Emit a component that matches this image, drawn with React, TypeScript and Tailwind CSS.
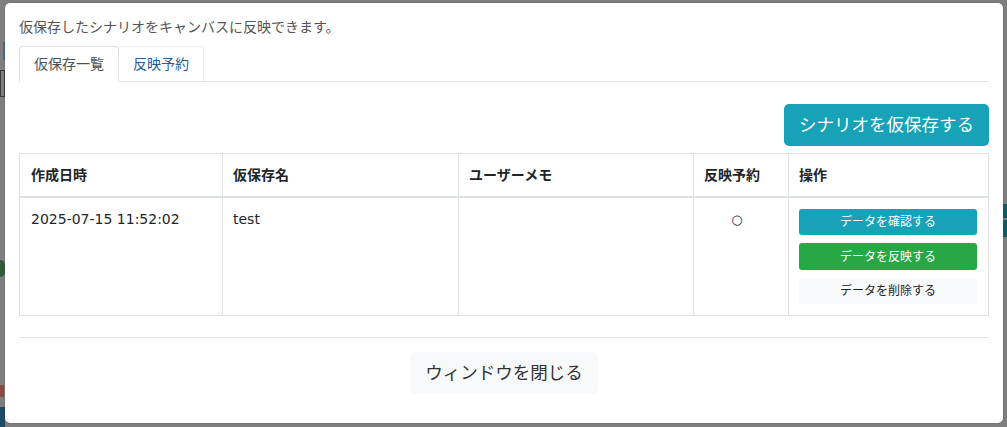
import React from "react";

const font = "font-['DejaVu_Sans','Noto_Sans_CJK_JP',sans-serif]";

const ActionButton = ({ label, tone }: { label: string; tone: "info" | "success" | "light" }) => {
  const toneClass =
    tone === "info"
      ? "bg-[#17a2b8] text-white"
      : tone === "success"
      ? "bg-[#28a745] text-white"
      : "bg-[#f8f9fa] text-[#212529]";
  return (
    <button
      className={`w-[178px] rounded-[3px] text-[12px] leading-[18px] flex items-center justify-center ${toneClass} ${
        tone === "success" ? "h-[27px]" : "h-[26px]"
      }`}
    >
      {label}
    </button>
  );
};

export default function App() {
  return (
    <div className={`w-[1007px] h-[427px] bg-[#7f7f7f] flex overflow-hidden ${font}`}>
      {/* dimmed page behind the modal, left edge */}
      <div className="w-[5px] flex flex-col shrink-0">
        <div className="h-[42px]" />
        <div className="h-[18px] w-[2px] ml-[3px] bg-[#4a6a8a]" />
        <div className="h-[10px]" />
        <div className="h-[27px] w-[5px] border border-[#3a3a3a]" />
        <div className="h-[163px]" />
        <div className="h-[17px] w-[5px] rounded-r-full bg-[#2f5a3a]" />
        <div className="h-[108px]" />
        <div className="h-[12px] w-[4px] bg-[#8a4a40]" />
        <div className="h-[10px]" />
        <div className="flex-1 bg-[#1f4a66]" />
      </div>

      {/* modal */}
      <div className="mt-[3px] w-[998px] h-[420px] bg-white rounded-[5px] px-[14px] pt-[14px] flex flex-col shrink-0 shadow-[0_0_2px_rgba(0,0,0,0.3)]">
        <p className="text-[14px] leading-[21px] text-[#555]">
          仮保存したシナリオをキャンバスに反映できます。
        </p>

        <div className="mt-[8px] h-[36px] flex items-end border-b border-[#dee2e6]">
          <div className="w-[100px] h-[36px] -mb-px border border-[#dee2e6] border-b-white bg-white rounded-t-[4px] flex items-center justify-center text-[14px] text-[#495057]">
            仮保存一覧
          </div>
          <div className="w-[85px] h-[35px] border-t border-r border-[#e9ecef] rounded-tr-[4px] flex items-center justify-center text-[14px] text-[#245c94]">
            反映予約
          </div>
        </div>

        <div className="mt-[22px] flex justify-end">
          <button className="h-[42px] w-[205px] rounded-[5px] bg-[#17a2b8] text-white text-[17.5px] leading-[26px]">
            シナリオを仮保存する
          </button>
        </div>

        <div className="mt-[7px] border border-[#dee2e6] text-[14px] text-[#212529]">
          <div className="grid grid-cols-[202px_236px_235px_95px_200px] h-[44px] border-b-2 border-[#dee2e6] font-bold">
            <div className="px-[11px] flex items-center">作成日時</div>
            <div className="px-[10px] border-l border-[#dee2e6] flex items-center">仮保存名</div>
            <div className="px-[10px] border-l border-[#dee2e6] flex items-center">ユーザーメモ</div>
            <div className="px-[10px] border-l border-[#dee2e6] flex items-center">反映予約</div>
            <div className="px-[10px] border-l border-[#dee2e6] flex items-center">操作</div>
          </div>
          <div className="grid grid-cols-[202px_236px_235px_95px_200px] h-[117px] leading-[21px]">
            <div className="px-[11px] pt-[11px]">2025-07-15 11:52:02</div>
            <div className="px-[10px] pt-[11px] border-l border-[#dee2e6]">test</div>
            <div className="px-[10px] pt-[11px] border-l border-[#dee2e6]" />
            <div className="pl-[10px] pr-[18px] pt-[11px] border-l border-[#dee2e6] text-center text-[13px]">○</div>
            <div className="pl-[10px] pt-[11px] border-l border-[#dee2e6] flex flex-col gap-[8px]">
              <ActionButton label="データを確認する" tone="info" />
              <ActionButton label="データを反映する" tone="success" />
              <ActionButton label="データを削除する" tone="light" />
            </div>
          </div>
        </div>

        <div className="mt-[21px] h-px bg-[#dee2e6]" />

        <div className="mt-[14px] flex justify-center">
          <button className="h-[42px] w-[187px] rounded-[5px] bg-[#f8f9fa] text-[#333] text-[17.5px] leading-[26px]">
            ウィンドウを閉じる
          </button>
        </div>
      </div>

      {/* dimmed page behind the modal, right edge */}
      <div className="w-[4px] flex flex-col shrink-0">
        <div className="h-[204px]" />
        <div className="h-[14px] bg-[#0f5a64]" />
        <div className="h-[2px]" />
        <div className="h-[17px] bg-[#0f5a64]" />
      </div>
    </div>
  );
}
